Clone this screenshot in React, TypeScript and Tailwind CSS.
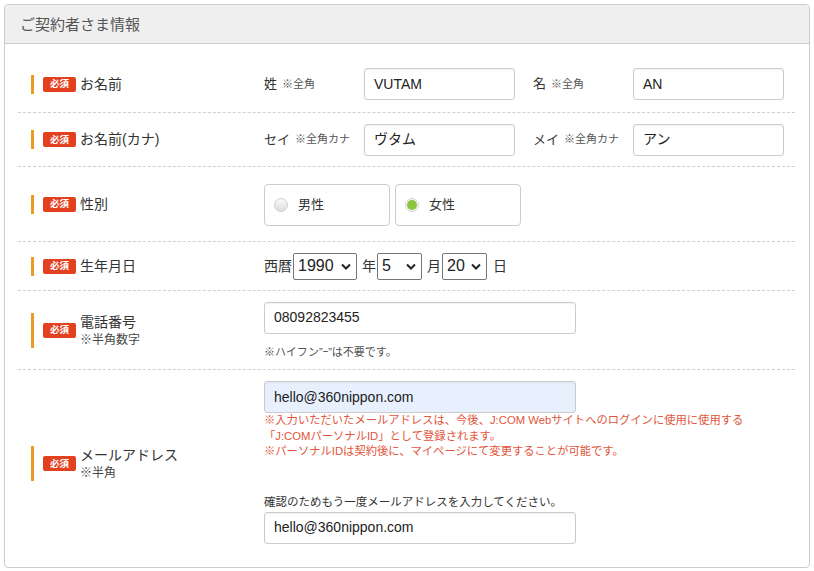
import {ReactNode} from 'react';

const font = {fontFamily: '"Liberation Sans", "Noto Sans CJK JP", sans-serif'};

function Badge() {
	return (
		<span className="flex h-[15px] w-[33px] shrink-0 items-center justify-center rounded-[2px] bg-[#e2401f] text-[9.5px] font-bold leading-none text-white">
			必須
		</span>
	);
}

function Label({title, note, className = ''}: {title: string; note?: string; className?: string}) {
	return (
		<div className={`flex w-[246px] shrink-0 items-stretch self-center pl-[13px] ${className}`}>
			<span className="w-[3px] shrink-0 bg-[#ec9a26]" />
			<div className="ml-[9px] flex items-center">
				<Badge />
			</div>
			<div className="ml-[4px] flex flex-col justify-center">
				<span className="text-[14px] leading-[19px] text-[#333]">{title}</span>
				{note && <span className="text-[12px] leading-[16px] text-[#444]">{note}</span>}
			</div>
		</div>
	);
}

function Row({children, className}: {children: ReactNode; className: string}) {
	return <div className={`flex items-center border-b border-dashed border-[#cfcfcf] ${className}`}>{children}</div>;
}

function TextInput({value, className = '', bg = 'bg-white'}: {value: string; className?: string; bg?: string}) {
	return (
		<div
			className={`flex h-[32px] items-center rounded-[3px] border border-[#cccccc] ${bg} pl-[9px] text-[14px] text-[#222] shadow-[inset_0_1px_2px_rgba(0,0,0,0.06)] ${className}`}
		>
			{value}
		</div>
	);
}

function SubLabel({main, note}: {main: string; note: string}) {
	return (
		<div className="flex w-[100px] shrink-0 items-center text-[#333]">
			<span className="text-[13px]">{main}</span>
			<span className="ml-[5px] text-[11px] text-[#555]">{note}</span>
		</div>
	);
}

function Radio({label, checked}: {label: string; checked?: boolean}) {
	return (
		<div className="flex h-[42px] w-[126px] items-center rounded-[4px] border border-[#cccccc] bg-white pl-[9px]">
			<span
				className={`flex h-[14px] w-[14px] items-center justify-center rounded-full border ${
					checked ? 'border-[#d7d7d7] bg-[#f4f4f4]' : 'border-[#cfcfcf] bg-gradient-to-b from-[#fafafa] to-[#dcdcdc]'
				}`}
			>
				{checked && <span className="h-[10px] w-[10px] rounded-full bg-[#8cc63e]" />}
			</span>
			<span className="ml-[10px] text-[13px] text-[#333]">{label}</span>
		</div>
	);
}

function Select({value, width}: {value: string; width: string}) {
	return (
		<div className={`flex h-[27px] ${width} items-center justify-between rounded-[2px] border border-[#767676] bg-white pl-[4px] pr-[5px]`}>
			<span className="text-[16px] leading-none text-[#222]">{value}</span>
			<svg width="10" height="7" viewBox="0 0 10 7" fill="none">
				<path d="M1 1.5 L5 5.5 L9 1.5" stroke="#222" strokeWidth="2" />
			</svg>
		</div>
	);
}

export default function App() {
	return (
		<div className="min-h-[571px] bg-white pl-[4px] pt-[4px]" style={font}>
			<div className="w-[806px] overflow-hidden rounded-[4px] border border-[#cccccc]">
				<div className="flex h-[39px] items-center border-b border-[#cccccc] bg-[#efefef] pl-[15px] pt-[2px] text-[15px] text-[#555]">
					ご契約者さま情報
				</div>

				<div className="pl-[13px] pr-[14px] pt-[12px]">
					<Row className="h-[57px]">
						<Label title="お名前" />
						<div className="flex items-center">
							<SubLabel main="姓" note="※全角" />
							<TextInput value="VUTAM" className="w-[151px]" />
							<div className="w-[18px]" />
							<SubLabel main="名" note="※全角" />
							<TextInput value="AN" className="w-[151px]" />
						</div>
					</Row>

					<Row className="h-[54px]">
						<Label title="お名前(カナ)" />
						<div className="flex items-center">
							<SubLabel main="セイ" note="※全角カナ" />
							<TextInput value="ヴタム" className="w-[151px]" />
							<div className="w-[18px]" />
							<SubLabel main="メイ" note="※全角カナ" />
							<TextInput value="アン" className="w-[151px]" />
						</div>
					</Row>

					<Row className="h-[75px]">
						<Label title="性別" />
						<div className="flex gap-[5px] pt-[1px]">
							<Radio label="男性" />
							<Radio label="女性" checked />
						</div>
					</Row>

					<Row className="h-[49px]">
						<Label title="生年月日" />
						<div className="flex items-center text-[14px] text-[#333]">
							<span className="mr-[1px]">西暦</span>
							<Select value="1990" width="w-[64px]" />
							<span className="ml-[5px] mr-[1px]">年</span>
							<Select value="5" width="w-[45px]" />
							<span className="ml-[5px] mr-[1px]">月</span>
							<Select value="20" width="w-[45px]" />
							<span className="ml-[6px]">日</span>
						</div>
					</Row>

					<Row className="h-[79px]">
						<Label title="電話番号" note="※半角数字" />
						<div className="flex flex-col">
							<TextInput value="08092823455" className="w-[312px]" />
							<span className="mt-[11px] text-[11px] leading-[14px] text-[#555]">※ハイフン”ｰ”は不要です。</span>
						</div>
					</Row>

					<div className="flex h-[197px] items-start">
						<Label title="メールアドレス" note="※半角" className="mb-[10px]" />
						<div className="flex flex-col pt-[11px]">
							<TextInput value="hello@360nippon.com" className="w-[312px]" bg="bg-[#e8f0fe]" />
							<div className="text-[11.3px] leading-[15.5px] text-[#e2553a]">
								<p>※入力いただいたメールアドレスは、今後、J:COM Webサイトへのログインに使用に使用する</p>
								<p>「J:COMパーソナルID」として登録されます。</p>
								<p>※パーソナルIDは契約後に、マイページにて変更することが可能です。</p>
							</div>
							<span className="mt-[34px] text-[11.5px] leading-[16px] text-[#333]">
								確認のためもう一度メールアドレスを入力してください。
							</span>
							<TextInput value="hello@360nippon.com" className="mt-[2px] w-[312px]" />
						</div>
					</div>
				</div>
			</div>
		</div>
	);
}
